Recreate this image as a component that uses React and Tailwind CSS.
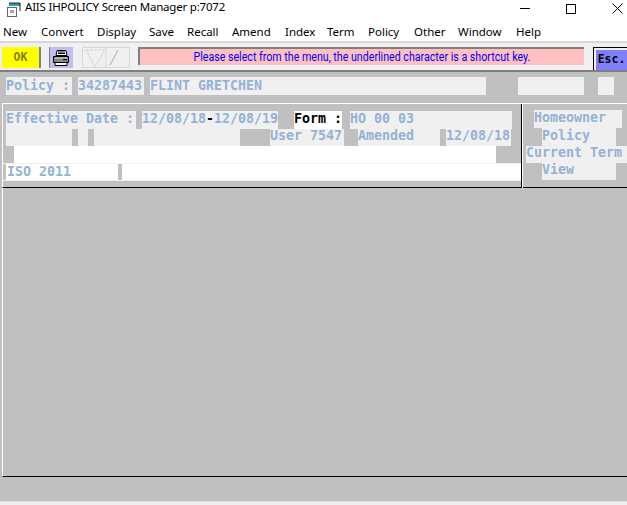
import React from "react";

const mono = "font-['DejaVu_Sans_Mono',monospace] text-[13.3px] font-bold text-[#94b2d6] whitespace-pre";
const F = ({ w, h = "h-[18px]", l = "leading-[16px]", bg = "bg-[#f0f0f0]", c = "", children }) => (
  <div className={`${w} ${h} ${l} ${bg} shrink-0 overflow-hidden ${mono} ${c}`}>{children}</div>
);
const Gap = ({ w }) => <div className={`${w} shrink-0`} />;

function AppIcon() {
  return (
    <svg width="16" height="16" viewBox="0 0 16 16" className="shrink-0 -mt-[4px]">
      <rect x="1.5" y="5.5" width="9" height="9" fill="#fff" stroke="#666" />
      <rect x="3" y="1" width="11" height="3" fill="#1c9fb0" />
      <path d="M3 1h11v8" fill="none" stroke="#222" />
      <rect x="4" y="8" width="4" height="3" fill="#9ab" />
    </svg>
  );
}

function Printer() {
  return (
    <svg width="18" height="18" viewBox="0 0 18 18">
      <path d="M5 1.5h9l1 5H4z" fill="#fff" stroke="#000" />
      <path d="M6 3h7M6 4.5h7" stroke="#000" />
      <path d="M1.5 7.5h15v6h-15z" fill="#888" stroke="#000" />
      <path d="M3 9h12" stroke="#ddd" />
      <path d="M3 13.5h12v3H3z" fill="#fff" stroke="#000" />
      <path d="M11 10.5h4" stroke="#000" />
    </svg>
  );
}

const menu = [
  ["New", "w-[38px] ml-[3px]"],
  ["Convert", "w-[56px]"],
  ["Display", "w-[52px]"],
  ["Save", "w-[38px]"],
  ["Recall", "w-[45px]"],
  ["Amend", "w-[53px]"],
  ["Index", "w-[42px]"],
  ["Term", "w-[41px]"],
  ["Policy", "w-[46px]"],
  ["Other", "w-[44px]"],
  ["Window", "w-[58px]"],
  ["Help", "w-[30px]"],
];

export default function App() {
  return (
    <div className="w-[627px] h-[505px] overflow-hidden bg-[#c0c0c0] flex flex-col font-['Noto_Sans',sans-serif] relative">
      {/* Title bar */}
      <div className="h-[24px] shrink-0 bg-white flex items-center pl-[6px] text-black relative">
        <AppIcon />
        <span className="ml-[3px] -mt-[10px] text-[11.5px] tracking-[-0.2px]">AIIS IHPOLICY Screen Manager p:7072</span>
        <div className="ml-auto flex items-center h-full -mt-[7px]">
          <div className="w-[10px] h-[1px] bg-black mr-[36px]" />
          <div className="w-[10px] h-[10px] border border-black mr-[36px]" />
          <svg width="11" height="11" viewBox="0 0 11 11" className="mr-[4px]"><path d="M0.5 0.5l10 10M10.5 0.5l-10 10" stroke="#000" /></svg>
        </div>
      </div>

      {/* Menu */}
      <div className="h-[17px] shrink-0 bg-white flex items-start text-[11.5px] leading-[15px] text-black">
        {menu.map(([m, w]) => (
          <div key={m} className={`${w} shrink-0`}>{m}</div>
        ))}
      </div>
      <div className="h-[2px] shrink-0 bg-[#d8d8d8]" />

      {/* Toolbar */}
      <div className="h-[27px] shrink-0 bg-[#f0f0f0] flex items-start pt-[4px]">
        <Gap w="w-[2px]" />
        <div className="w-[39px] h-[21px] bg-[#ffff00] text-[#808000] text-[11.5px] font-bold font-['DejaVu_Sans_Mono',monospace] flex items-center justify-center border-r-2 border-[#808080]">OK</div>
        <Gap w="w-[8px]" />
        <div className="w-[24px] h-[21px] bg-[#c0c0f0] border-l border-[#808080] flex items-center justify-center"><Printer /></div>
        <Gap w="w-[9px]" />
        <div className="w-[48px] h-[21px] flex border border-[#d8d8d8]">
          <svg width="46" height="19" viewBox="0 0 46 19">
            <path d="M3 2h19l-10 17z" fill="none" stroke="#d0d0d0" strokeDasharray="3 1" />
            <path d="M23 0v19" stroke="#d8d8d8" />
            <path d="M35 2l-8 15" stroke="#a8a8a8" />
          </svg>
        </div>
        <Gap w="w-[8px]" />
        <div className="w-[2px] h-[18px] bg-[#808080]" />
        <div className="w-[445px] h-[18px] border-t-2 border-[#808080] bg-[#ffc0c0] text-[#0000ff] font-['Roboto',sans-serif] text-[12px] leading-[16px] text-center whitespace-nowrap">
          <span className="inline-block scale-x-[0.887]">Please select from the menu, the underlined character is a shortcut key.</span>
        </div>
        <Gap w="w-[9px]" />
        <div className="w-[34px] h-[23px] border-l border-t border-black pl-[2px] pt-[2px]">
          <div className="w-full h-full bg-[#8080ff] text-black text-[11.5px] font-bold font-['DejaVu_Sans_Mono',monospace] text-center leading-[19px]">Esc.</div>
        </div>
      </div>
      <div className="h-[2px] shrink-0 bg-[#808080]" />

      {/* Policy row */}
      <div className="shrink-0 flex mt-[5px]">
        <Gap w="w-[6px]" />
        <F w="w-[66px]" l="leading-[18px]">Policy :</F>
        <Gap w="w-[6px]" />
        <F w="w-[66px]" l="leading-[18px]">34287443</F>
        <Gap w="w-[6px]" />
        <F w="w-[336px]" l="leading-[18px]">FLINT GRETCHEN</F>
        <Gap w="w-[32px]" />
        <F w="w-[66px]" />
        <Gap w="w-[14px]" />
        <F w="w-[16px]" />
      </div>

      {/* Framed panel */}
      <div className="shrink-0 mt-[8px] ml-[2px] h-[85px] border-t border-l border-white border-b border-b-black flex">
        <div className="w-[518px] shrink-0 flex flex-col pt-[7px]">
          <div className="flex h-[18px]">
            <Gap w="w-[3px]" />
            <F w="w-[130px]">Effective Date :</F>
            <Gap w="w-[6px]" />
            <F w="w-[136px]">12/08/18<span className="text-black">-</span>12/08/19</F>
            <Gap w="w-[16px]" />
            <F w="w-[48px]" bg="bg-white" c="!text-black">Form :</F>
            <Gap w="w-[8px]" />
            <F w="w-[162px]">HO 00 03</F>
          </div>
          <div className="flex h-[17px]">
            <Gap w="w-[3px]" />
            <F w="w-[66px]" h="h-[17px]" />
            <Gap w="w-[6px]" />
            <F w="w-[10px]" h="h-[17px]" />
            <Gap w="w-[6px]" />
            <F w="w-[146px]" h="h-[17px]" />
            <Gap w="w-[30px]" />
            <F w="w-[74px]" h="h-[17px]" l="leading-[14px]">User 7547</F>
            <Gap w="w-[14px]" />
            <F w="w-[82px]" h="h-[17px]" l="leading-[14px]">Amended</F>
            <Gap w="w-[6px]" />
            <F w="w-[65px]" h="h-[17px]" l="leading-[14px]">12/08/18</F>
          </div>
          <div className="flex h-[18px] pb-[1px]">
            <Gap w="w-[11px]" />
            <div className="w-[482px] bg-white" />
          </div>
          <div className="flex h-[18px] border-y border-[#f0f0f0] -mt-[1px]">
            <Gap w="w-[3px]" />
            <F w="w-[112px]" h="h-[16px]" bg="bg-white" c="pl-[1px]">ISO 2011</F>
            <Gap w="w-[4px]" />
            <div className="flex-1 bg-white" />
          </div>
        </div>
        <div className="w-[1px] shrink-0 bg-black -mb-[1px]" />
        <div className="w-[1px] shrink-0 bg-white -mb-[1px]" />
        <div className="flex-1 flex flex-col pt-[6px] items-start">
          <F w="w-[88px]" c="ml-[11px]">Homeowner</F>
          <F w="w-[74px]" c="ml-[19px]" l="leading-[15px]">Policy</F>
          <F w="w-[102px]" h="h-[17px]" c="ml-[3px]" l="leading-[13px]">Current Term</F>
          <F w="w-[74px]" h="h-[17px]" c="ml-[19px]" l="leading-[13px]">View</F>
        </div>
      </div>

      {/* Main gray area */}
      <div className="shrink-0 ml-[2px] h-[289px] border-l border-white border-b border-b-black" />
      <div className="flex-1" />
      <div className="h-[1px] shrink-0 bg-[#e0e0e0]" />
      <div className="h-[3px] shrink-0 bg-[#f0f0f0]" />
    </div>
  );
}
